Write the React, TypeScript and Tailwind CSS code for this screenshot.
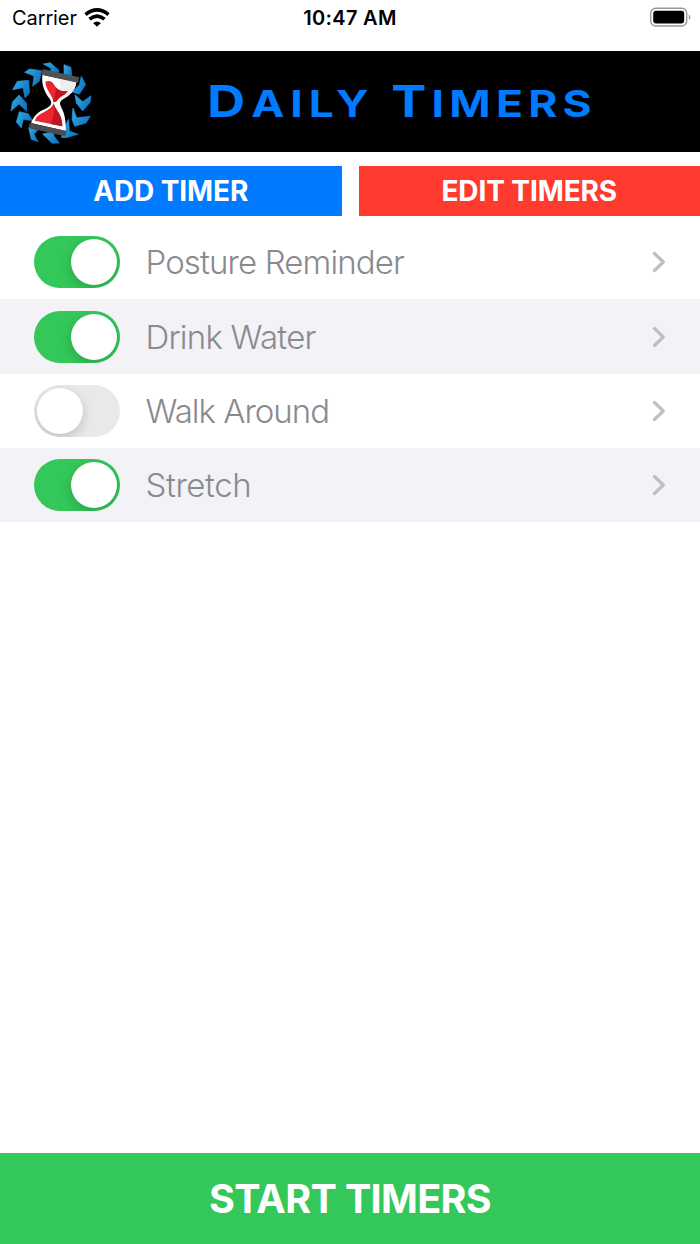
const chevrons = [
  "M57 135L80 160L80 184L57 162L33 183L37 157Z",
  "M52 94L86 91L89 128L75 144L69 113L38 119Z",
  "M74 67L89 57L125 62L118 94L98 109L102 78Z",
  "M130 42L151 38L177 61L172 76L150 74L153 55Z",
  "M192 44L213 52L216 84L192 80Z",
  "M244 79L257 104L238 133L217 126L238 104Z",
  "M225 134L248 155L273 137L271 156L248 183L229 159Z",
  "M219 174L230 203L271 199L258 219L224 229L216 208Z",
  "M206 208L208 243L235 253L198 263L184 262L202 214Z",
  "M128 252L160 245L162 258L178 279L156 280Z",
  "M86 233L113 241L102 252L114 275L94 268Z",
  "M58 185L85 191L98 212L70 208L64 234L49 216Z",
];

function Logo() {
  return (
    <svg viewBox="0 3 330 306" className="h-[102px] w-[110px] shrink-0" aria-hidden="true">
      <defs>
        <linearGradient id="blue" x1="0" y1="0" x2="1" y2="0.5">
          <stop offset="0" stopColor="#38a8e4" />
          <stop offset="1" stopColor="#0f76c2" />
        </linearGradient>
      </defs>
      {chevrons.map((d) => (
        <path key={d} d={d} fill="url(#blue)" stroke="url(#blue)" strokeWidth="2" />
      ))}
      <path d="M127 74L229 97C225 124 208 137 190 147C171 158 184 168 191 188C196 205 198 222 197 243L93 219C102 194 119 183 137 176C157 167 157 157 148 145C135 127 124 108 127 74Z" fill="#fff" />
      <path d="M180 86L229 97C225 124 208 137 190 147L170 153L165 157L180 112Z" fill="#eeeef0" />
      <path d="M136 95C149 90 159 96 164 107C173 121 186 125 203 123C195 137 177 139 170 154L160 157C160 137 137 121 136 95Z" fill="#ea2630" />
      <path d="M166 111C175 122 187 125 203 123C195 137 177 139 170 154L160 156C162 140 170 128 166 111Z" fill="#bf1622" />
      <path d="M161 160C165 181 187 191 187 229L104 212C115 184 151 188 161 160Z" fill="#ea2630" />
      <path d="M161 160C165 181 187 191 187 229L152 222C162 200 164 183 161 160Z" fill="#bd1622" />
      <path d="M128 57L238 82L234 98L125 74Z" fill="#505155" />
      <path d="M89 219L200 243L196 259L86 234Z" fill="#4b4c50" />
    </svg>
  );
}

function StatusBar() {
  return (
    <div className="grid h-[51px] shrink-0 grid-cols-3 items-start px-3 text-black">
      <div className="flex items-center gap-[7px] pt-1">
        <span className="text-[20px] leading-7 tracking-[-0.1px]">Carrier</span>
        <svg viewBox="0 0 78 58" className="-mt-0.5 h-[19px] w-[26px]" aria-hidden="true">
          <g fill="none" stroke="#000" strokeWidth="11">
            <path d="M4 20Q39-8 74 20" />
            <path d="M16 34Q39 15 62 34" />
          </g>
          <path d="M27 46Q39 36 51 46L39 57Z" />
        </svg>
      </div>
      <span className="pt-1 text-center text-[20px] font-semibold leading-7 tracking-[0.3px]">10:47 AM</span>
      <svg viewBox="0 0 42 20" className="mr-[-3px] mt-[7px] h-5 w-[42px] justify-self-end" aria-hidden="true">
        <rect x="1.7" y="1.2" width="36" height="17.8" rx="5" fill="none" stroke="#999" strokeWidth="1.4" />
        <rect x="4.2" y="3.8" width="31" height="12.6" rx="2.8" />
        <path d="M39.8 7.2Q43 10 39.8 13Z" fill="#999" />
      </svg>
    </div>
  );
}

function Toggle({ on }: { on: boolean }) {
  return (
    <span className={on
      ? "flex h-[52px] w-[86px] items-center justify-end overflow-hidden rounded-full bg-[#34c759] px-[3px]"
      : "flex h-[52px] w-[86px] items-center justify-start overflow-hidden rounded-full bg-[#e9e9eb] px-[3px]"}>
      <span className="h-[46px] w-[46px] rounded-full bg-white shadow-[0_4px_12px_rgba(0,0,0,0.18)]" />
    </span>
  );
}

const timers = [
  { name: "Posture Reminder", on: true, track: "tracking-[-0.87px]" },
  { name: "Drink Water", on: true, track: "tracking-[-0.78px]" },
  { name: "Walk Around", on: false, track: "tracking-[-1px]" },
  { name: "Stretch", on: true, track: "tracking-[-0.4px]" },
];

export default function App() {
  return (
    <div className="flex h-[1244px] w-[700px] flex-col overflow-hidden bg-white font-['Inter',sans-serif]">
      <StatusBar />
      <header className="flex h-[101.4px] shrink-0 items-center bg-black">
        <Logo />
        <h1 className="-mt-0.5 ml-[97px] flex items-baseline whitespace-nowrap text-[37px] font-bold leading-none text-[#007aff]">
          <span className="w-[184px]"><span className="inline-block origin-left scale-x-[1.2] tracking-[5px]"><span className="text-[44px]">D</span>AILY</span></span>
          <span className="inline-block origin-left scale-x-[1.2] tracking-[4.4px]"><span className="text-[44px]">T</span>IMERS</span>
        </h1>
      </header>
      <div className="mt-[13.4px] grid h-[50.4px] shrink-0 grid-cols-2 gap-[17px] text-[28px] font-bold tracking-[-0.1px] text-white">
        <button className="bg-[#007aff] pt-px">ADD TIMER</button>
        <button className="bg-[#ff3b30] pt-px">EDIT TIMERS</button>
      </div>
      <ul className="mt-[8.9px]">
        {timers.map((t) => (
          <li key={t.name} className="flex h-[74.35px] items-center pl-[34px] pr-[34px] text-[33px] font-light text-[#8a8a8e] even:bg-[#f2f2f7]">
            <Toggle on={t.on} />
            <span className={`ml-[25.5px] flex-1 pt-[1.5px] ${t.track}`}>{t.name}</span>
            <svg viewBox="0 0 14 22" className="h-[22px] w-[14px]" fill="none" stroke="#bfbfc3" strokeWidth="3.2" strokeLinecap="round" strokeLinejoin="round" aria-hidden="true">
              <path d="M2.5 2.5L11.3 11L2.5 19.5" />
            </svg>
          </li>
        ))}
      </ul>
      <button className="mt-auto h-[91.5px] shrink-0 bg-[#34c759] pt-[3px] text-[39.5px] font-bold tracking-[-0.65px] text-white">START TIMERS</button>
    </div>
  );
}
